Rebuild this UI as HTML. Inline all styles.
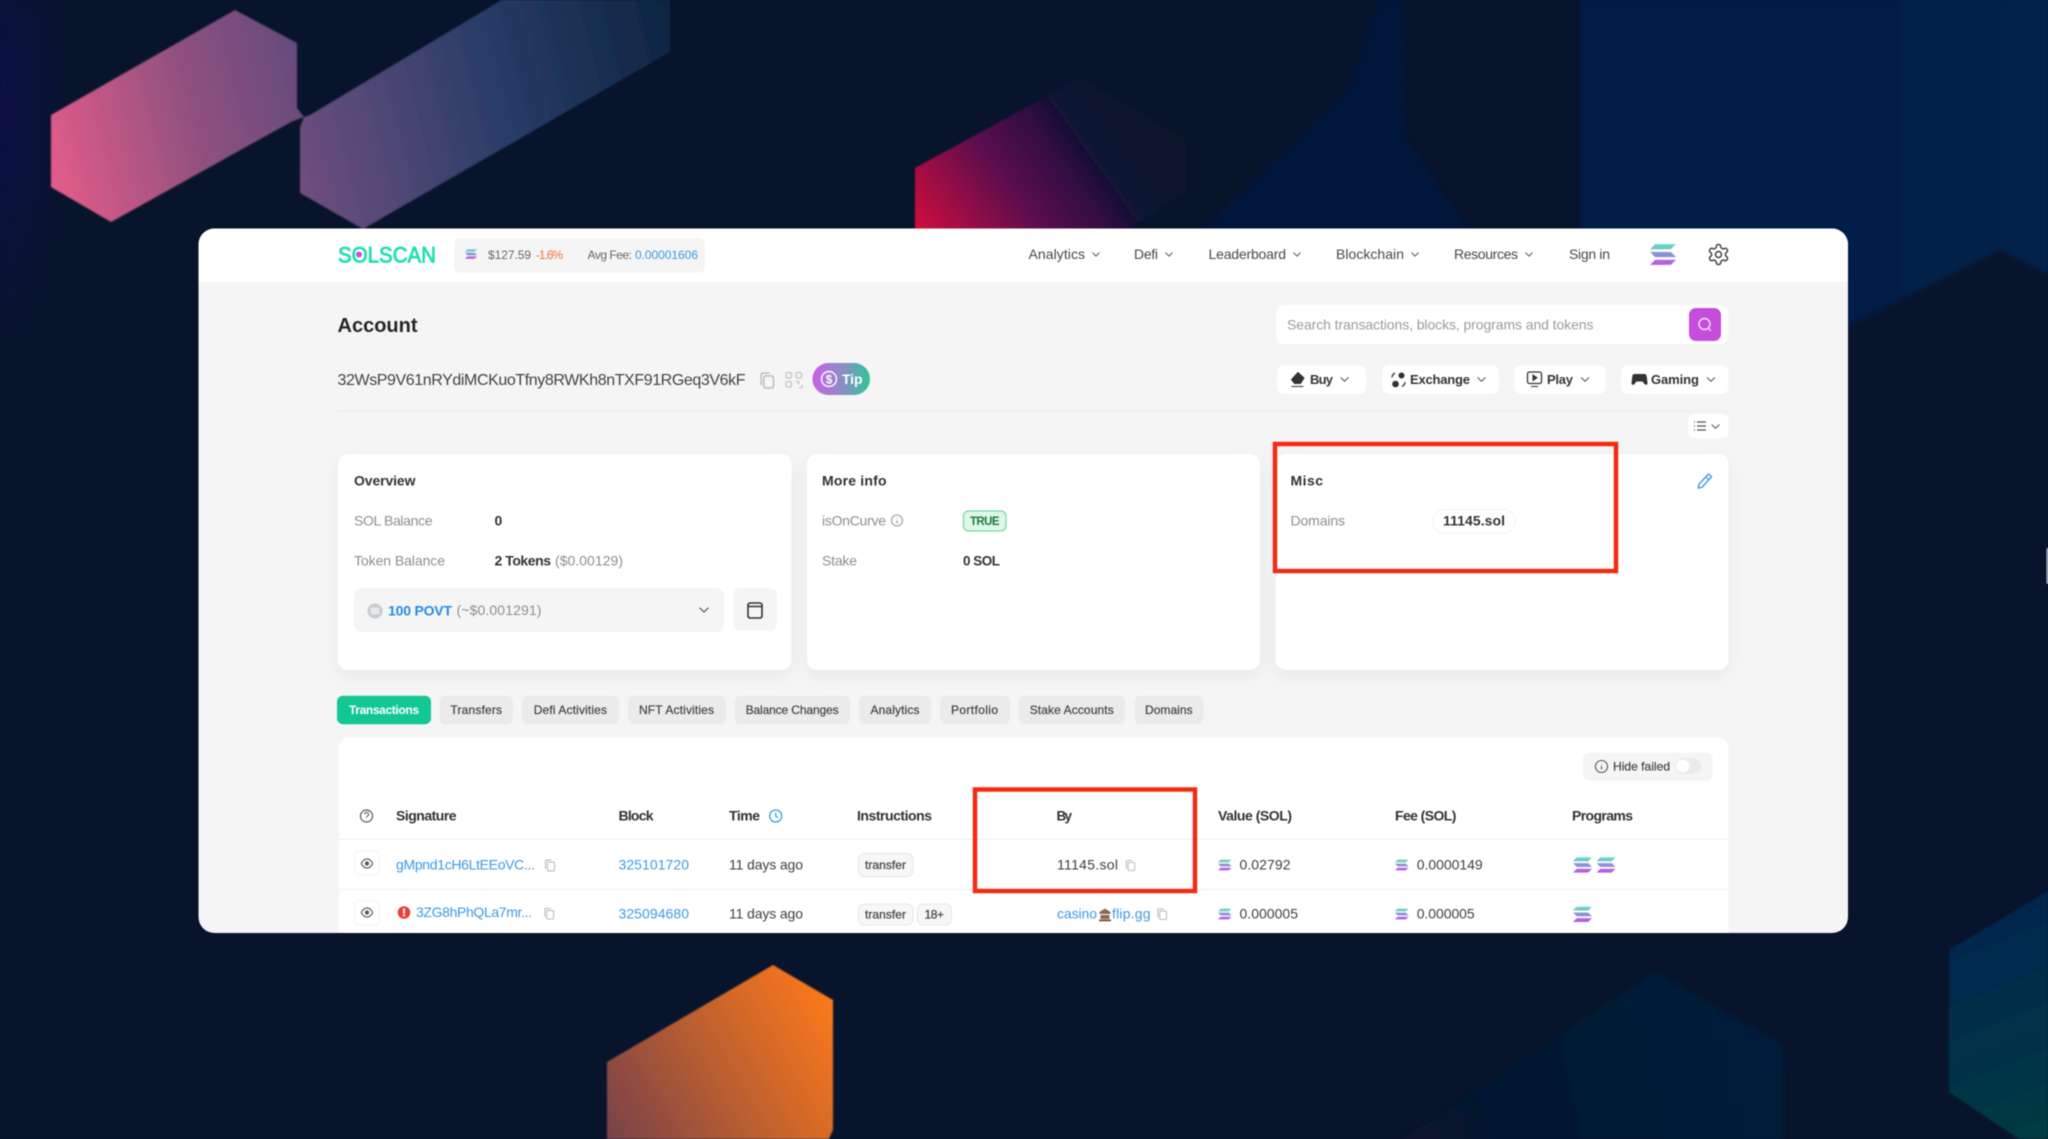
<!DOCTYPE html>
<html lang="en"><head><meta charset="utf-8"><title>Solscan Account</title>
<style>
html,body{margin:0;padding:0;background:#08142b;width:2048px;height:1139px;overflow:hidden}
svg{display:block;filter:blur(.45px)}
text{font-family:"Liberation Sans",Arial,sans-serif;font-size:14px;fill:#3f3f3f}
.b{font-weight:700;fill:#333}
.g{fill:#8e8e8e}
.l{fill:#3a9be2}
.s12{font-size:12px}
.tab{font-size:12px;fill:#444;stroke:#444;stroke-width:.2px}
.nav{fill:#484848}
.btn{font-size:13px;font-weight:700;fill:#333}
</style></head><body>
<svg width="2048" height="1139" viewBox="0 0 2048 1139" xmlns="http://www.w3.org/2000/svg">
<defs>
<filter id="bf" x="-20%" y="-20%" width="140%" height="140%"><feGaussianBlur stdDeviation="3"/></filter>
<filter id="bs" x="-10%" y="-10%" width="120%" height="120%"><feGaussianBlur stdDeviation=".7"/></filter>
<radialGradient id="lf" gradientUnits="userSpaceOnUse" cx="0" cy="110" r="1" gradientTransform="translate(0 110) scale(75 260) translate(0 -110)"><stop offset="0" stop-color="#0d1045"/><stop offset="1" stop-color="#0d1045" stop-opacity="0"/></radialGradient>
<linearGradient id="pk" gradientUnits="userSpaceOnUse" x1="51" y1="200" x2="670" y2="40"><stop offset="0" stop-color="#e65c88"/><stop offset=".25" stop-color="#8f507f"/><stop offset=".45" stop-color="#604b7b"/><stop offset=".72" stop-color="#283c66"/><stop offset="1" stop-color="#0e2542"/></linearGradient>
<linearGradient id="rd" gradientUnits="userSpaceOnUse" x1="915" y1="240" x2="1150" y2="70"><stop offset="0" stop-color="#d80f3c"/><stop offset=".38" stop-color="#5a0d4e"/><stop offset=".56" stop-color="#330b42"/><stop offset=".7" stop-color="#0a1430"/><stop offset="1" stop-color="#08142b"/></linearGradient>
<linearGradient id="or" gradientUnits="userSpaceOnUse" x1="840" y1="1000" x2="600" y2="1139"><stop offset="0" stop-color="#ff7a1a"/><stop offset=".5" stop-color="#bb5f30"/><stop offset="1" stop-color="#74404a"/></linearGradient>
<linearGradient id="bl" gradientUnits="userSpaceOnUse" x1="1400" y1="1139" x2="1783" y2="1050"><stop offset="0" stop-color="#07152c"/><stop offset="1" stop-color="#041f3c"/></linearGradient>
<linearGradient id="te" gradientUnits="userSpaceOnUse" x1="1960" y1="930" x2="2040" y2="1130"><stop offset="0" stop-color="#03264e"/><stop offset="1" stop-color="#063a42"/></linearGradient>
<linearGradient id="tr" gradientUnits="userSpaceOnUse" x1="1580" y1="0" x2="2048" y2="0"><stop offset="0" stop-color="#041a48"/><stop offset="1" stop-color="#04224b"/></linearGradient>
<linearGradient id="tip" x1="0" y1="0" x2="1" y2="0"><stop offset="0" stop-color="#c860e2"/><stop offset=".5" stop-color="#8f8cc8"/><stop offset="1" stop-color="#2ec59a"/></linearGradient>
<linearGradient id="sol" x1="0" y1="0" x2="0" y2="1"><stop offset="0" stop-color="#5fe3c0"/><stop offset=".5" stop-color="#8c8fd8"/><stop offset="1" stop-color="#c352e6"/></linearGradient>
<clipPath id="cc"><rect x="198.500" y="228.500" width="1649.500" height="704.500" rx="16"/></clipPath>
<symbol id="sl" viewBox="0 0 20 16"><path d="M4 0H20L16 4H0ZM0 6H16L20 10H4ZM4 12H20L16 16H0Z" fill="url(#sol)"/></symbol>
<symbol id="cv" viewBox="0 0 10 6"><path d="M1 1L5 5L9 1" fill="none" stroke="#555" stroke-width="1.200" stroke-linecap="round" stroke-linejoin="round"/></symbol>
<symbol id="cp" viewBox="0 0 12 13"><rect x="3.500" y="3" width="7.500" height="9.200" rx="1.500" fill="none" stroke="#b8b8b8" stroke-width="1.100"/><path d="M2 9.500H1.500V2A1.200 1.200 0 0 1 2.700 .8H8" fill="none" stroke="#b8b8b8" stroke-width="1.100"/></symbol>
<symbol id="ey" viewBox="0 0 14 12"><path d="M.8 6C2.500 2.600 4.600 1 7 1s4.500 1.600 6.200 5C11.500 9.400 9.400 11 7 11S2.500 9.400.8 6Z" fill="none" stroke="#555" stroke-width="1.200"/><circle cx="7" cy="6" r="2.300" fill="#555"/></symbol>
</defs>

<!-- background -->
<rect width="2048" height="1139" fill="#08142b"/>
<rect x="0" y="0" width="80" height="370" fill="url(#lf)"/>
<polygon points="1580,-20 2070,-20 2070,285 2000,250 1850,325 1700,300 1580,245" fill="url(#tr)" filter="url(#bf)"/>
<polygon points="1188,245 1350,85 1385,-20 1402,-20 1405,135 1478,245" fill="#05163a" filter="url(#bf)"/>
<g filter="url(#bs)">
<polygon points="235,10 297,43 297,108 304,117 291,122 111,222 51,187 51,115" fill="url(#pk)"/>
<polygon points="510,-5 670,-5 670,52 363,229 300,193 300,127 304,117 310,115" fill="url(#pk)"/>
<polygon points="915,168 1080,78 1186,140 1186,190 1124,232 915,232" fill="url(#rd)"/>
<polygon points="773,965 833,1000 833,1130 826,1145 607,1145 607,1062" fill="url(#or)"/>
</g>
<polygon points="1655,972 1783,1045 1783,1160 1369,1160" fill="url(#bl)" filter="url(#bf)"/>
<polygon points="1949,950 2070,878 2070,1160 2035,1150 1949,1092" fill="url(#te)" filter="url(#bs)"/>
<rect x="2046.500" y="548" width="1.500" height="36" rx=".7" fill="#dfe3ea" opacity=".85"/>

<!-- main card -->
<g clip-path="url(#cc)">
<rect x="198" y="228" width="1651" height="706" fill="#f5f5f5"/>
<rect x="198" y="228" width="1651" height="54" fill="#fff"/>

<!-- header -->
<text x="338" y="262.500" style="font-size:22px;fill:#1fdfae;stroke:#1fdfae;stroke-width:.8px" textLength="98" lengthAdjust="spacingAndGlyphs">SOLSCAN</text>
<circle cx="359" cy="254.500" r="3" fill="#c94fd8"/>
<rect x="454" y="238" width="251" height="34.500" rx="6" fill="#f5f5f5"/>
<use href="#sl" x="465" y="249" width="12" height="10"/>
<text x="488" y="259" class="s12" style="fill:#666" textLength="43">$127.59</text>
<text x="536" y="259" class="s12" style="fill:#ef7134" textLength="27">-1.6%</text>
<text x="587.500" y="259" class="s12" style="fill:#666" textLength="44.500">Avg Fee:</text>
<text x="635" y="259" class="s12 l" textLength="63">0.00001606</text>

<text x="1028.500" y="259" class="nav" textLength="56.500">Analytics</text><use href="#cv" x="1092" y="252" width="8" height="5"/>
<text x="1134" y="259" class="nav" textLength="24">Defi</text><use href="#cv" x="1165" y="252" width="8" height="5"/>
<text x="1208.500" y="259" class="nav" textLength="77.500">Leaderboard</text><use href="#cv" x="1293" y="252" width="8" height="5"/>
<text x="1336" y="259" class="nav" textLength="68">Blockchain</text><use href="#cv" x="1411" y="252" width="8" height="5"/>
<text x="1454" y="259" class="nav" textLength="64">Resources</text><use href="#cv" x="1525" y="252" width="8" height="5"/>
<text x="1569" y="259" class="nav" textLength="41">Sign in</text>
<use href="#sl" x="1650" y="244" width="26" height="21" preserveAspectRatio="none"/>
<g transform="translate(1706.500,242.500)"><path d="M12.220 2h-.44a2 2 0 0 0-2 2v.18a2 2 0 0 1-1 1.730l-.43.25a2 2 0 0 1-2 0l-.15-.08a2 2 0 0 0-2.730.73l-.22.38a2 2 0 0 0 .73 2.730l.15.1a2 2 0 0 1 1 1.720v.51a2 2 0 0 1-1 1.740l-.15.09a2 2 0 0 0-.73 2.730l.22.38a2 2 0 0 0 2.730.73l.15-.08a2 2 0 0 1 2 0l.43.25a2 2 0 0 1 1 1.730V20a2 2 0 0 0 2 2h.44a2 2 0 0 0 2-2v-.18a2 2 0 0 1 1-1.730l.43-.25a2 2 0 0 1 2 0l.15.08a2 2 0 0 0 2.730-.73l.22-.39a2 2 0 0 0-.73-2.730l-.15-.08a2 2 0 0 1-1-1.740v-.5a2 2 0 0 1 1-1.740l.15-.09a2 2 0 0 0 .73-2.730l-.22-.38a2 2 0 0 0-2.730-.73l-.15.08a2 2 0 0 1-2 0l-.43-.25a2 2 0 0 1-1-1.730V4a2 2 0 0 0-2-2z" fill="none" stroke="#444" stroke-width="1.500"/><circle cx="12" cy="12" r="3" fill="none" stroke="#444" stroke-width="1.500"/></g>

<!-- title -->
<text x="337.500" y="332" class="b" style="font-size:20px;fill:#262626" textLength="80">Account</text>
<text x="337.500" y="385" style="font-size:16px;fill:#444" textLength="408">32WsP9V61nRYdiMCKuoTfny8RWKh8nTXF91RGeq3V6kF</text>
<use href="#cp" x="759" y="372" width="16" height="17"/>
<g fill="none" stroke="#c4c4c4" stroke-width="1.300"><rect x="786" y="372.500" width="5.500" height="5.500" rx="1.500"/><rect x="796" y="372.500" width="5.500" height="5.500" rx="1.500"/><rect x="786" y="381.500" width="5.500" height="5.500" rx="1.500"/><path d="M795.500 381.500h3v3M802 385v2.500h-3"/></g>
<rect x="812.500" y="363" width="57.500" height="32" rx="16" fill="url(#tip)"/>
<circle cx="829" cy="379" r="7.500" fill="none" stroke="#fff" stroke-width="1.400"/>
<text x="829" y="383.500" text-anchor="middle" class="s12" style="fill:#fff;font-weight:700">$</text>
<text x="842" y="384" class="b" style="fill:#fff" textLength="20.500">Tip</text>

<!-- search -->
<rect x="1276" y="305" width="452.500" height="39" rx="8" fill="#fff"/>
<text x="1287" y="329.500" style="fill:#9b9b9b" textLength="306.500">Search transactions, blocks, programs and tokens</text>
<rect x="1689" y="308" width="32" height="33" rx="7" fill="#c44edb"/>
<circle cx="1704.500" cy="324" r="5.500" fill="none" stroke="#f5dcfa" stroke-width="1.400"/><path d="M1708 328l2.500 2.500" stroke="#f5dcfa" stroke-width="1.400" stroke-linecap="round"/>

<!-- action buttons -->
<rect x="1277" y="365" width="89" height="29" rx="7" fill="#fff"/>
<rect x="1382" y="365" width="117" height="29" rx="7" fill="#fff"/>
<rect x="1514.500" y="365" width="91" height="29" rx="7" fill="#fff"/>
<rect x="1621" y="365" width="107.500" height="29" rx="7" fill="#fff"/>
<text x="1310" y="384" class="btn" textLength="23">Buy</text>
<text x="1410" y="384" class="btn" textLength="60">Exchange</text>
<text x="1547" y="384" class="btn" textLength="26">Play</text>
<text x="1651" y="384" class="btn" textLength="48">Gaming</text>
<use href="#cv" x="1340" y="376.500" width="9" height="6"/><use href="#cv" x="1477" y="376.500" width="9" height="6"/><use href="#cv" x="1580.500" y="376.500" width="9" height="6"/><use href="#cv" x="1706.500" y="376.500" width="9" height="6"/>
<path d="M1298 372.500l6 5.500-3.500 5.500h-6l-3-4zM1291.500 386.500h12" fill="#333" stroke="#333" stroke-width="1"/>
<g fill="#333"><circle cx="1401.500" cy="375.500" r="3"/><circle cx="1395.500" cy="384" r="3.300"/><path d="M1392 377.500c0-2 1-3.500 3-4.500M1405 382c0 2-1 3.500-3 4.500" fill="none" stroke="#333" stroke-width="1.300"/></g>
<rect x="1527.500" y="372" width="14" height="11.500" rx="2" fill="none" stroke="#333" stroke-width="1.300"/><path d="M1533 375v5.500l4-2.700zM1531 386.500h7" fill="#333" stroke="#333"/>
<path d="M1634.500 374h10c1.500 0 2 1 2.200 2.500l.8 6.500c.2 1.800-1.900 2.500-3 1l-2-2.500h-6l-2 2.500c-1.100 1.500-3.200.8-3-1l.8-6.500c.2-1.500.7-2.500 2.200-2.500z" fill="#333"/>

<rect x="338" y="410.500" width="1390.500" height="1" fill="#ececec"/>
<rect x="1688" y="414" width="40.500" height="24" rx="5" fill="#fff"/>
<path d="M1697 422h9M1697 426h9M1697 430h9M1694 422h1M1694 426h1M1694 430h1" stroke="#555" stroke-width="1.300"/>
<use href="#cv" x="1711" y="423.500" width="9" height="6"/>

<!-- cards -->
<g style="filter:drop-shadow(0 6px 8px rgba(0,0,0,.05))" fill="#fff">
<rect x="338" y="454" width="453.500" height="216" rx="10"/>
<rect x="807" y="454" width="453" height="216" rx="10"/>
<rect x="1275.500" y="454" width="453" height="216" rx="10"/>
</g>

<text x="354" y="485.500" class="b" textLength="61.500">Overview</text>
<text x="354" y="525.500" class="g" textLength="78.500">SOL Balance</text>
<text x="494.500" y="525.500" class="b">0</text>
<text x="354" y="565.500" class="g" textLength="91">Token Balance</text>
<text x="494.500" y="565.500" class="b" textLength="56.500">2 Tokens</text>
<text x="555" y="565.500" class="g" textLength="68">($0.00129)</text>
<rect x="354" y="588" width="370" height="44" rx="8" fill="#f5f5f5"/>
<circle cx="375" cy="611" r="7.500" fill="#c6cbcf"/><rect x="370.500" y="607.500" width="9" height="7" rx="1" fill="#e6e8ea"/>
<text x="388" y="615.500" style="font-weight:700;fill:#2a8ae2" textLength="64">100 POVT</text>
<text x="456.500" y="615" class="g" textLength="85">(~$0.001291)</text>
<use href="#cv" x="699" y="607" width="10" height="6"/>
<rect x="733" y="588" width="44" height="42.500" rx="7" fill="#f5f5f5"/>
<rect x="748" y="603" width="14" height="15" rx="2" fill="none" stroke="#333" stroke-width="1.600"/><path d="M748 606.500h14" stroke="#333" stroke-width="1.400"/>

<text x="822" y="485.500" class="b" textLength="64.500">More info</text>
<text x="822" y="525.500" class="g" textLength="64">isOnCurve</text>
<circle cx="897" cy="520.500" r="5.500" fill="none" stroke="#999" stroke-width="1.100"/><path d="M897 518v.6M897 520v3.500" stroke="#999" stroke-width="1.100"/>
<rect x="963.500" y="511" width="42.500" height="20" rx="5" fill="#ddf8e7" stroke="#62d195"/>
<text x="970" y="525" style="font-size:11.500px;font-weight:700;fill:#1f7a3f" textLength="29.500">TRUE</text>
<text x="822" y="565.500" class="g" textLength="35">Stake</text>
<text x="963" y="565.500" style="font-size:13.500px;font-weight:700;fill:#333" textLength="37">0 SOL</text>

<text x="1290.500" y="485.500" class="b" textLength="32.500">Misc</text>
<text x="1290.500" y="525.500" class="g" textLength="54.500">Domains</text>
<rect x="1432.500" y="509.500" width="83" height="23.500" rx="11.700" fill="#fff" stroke="#f2f2f2"/>
<text x="1443" y="525.500" class="b" textLength="62">11145.sol</text>
<path d="M1708.500 474l3 2.700-9.500 10.500-3.800 1 .8-3.900z" fill="none" stroke="#4a9fe2" stroke-width="1.500" stroke-linejoin="round"/><path d="M1706 477l3 2.700" stroke="#4a9fe2" stroke-width="1.200"/>

<!-- tabs -->
<g fill="#ebebeb">
<rect x="337" y="695.700" width="94" height="28.500" rx="6" fill="#13c795"/>
<rect x="439.500" y="695.700" width="73.500" height="28.500" rx="6"/>
<rect x="522" y="695.700" width="97" height="28.500" rx="6"/>
<rect x="628" y="695.700" width="98" height="28.500" rx="6"/>
<rect x="734.600" y="695.700" width="115.400" height="28.500" rx="6"/>
<rect x="859" y="695.700" width="72" height="28.500" rx="6"/>
<rect x="940" y="695.700" width="70" height="28.500" rx="6"/>
<rect x="1018.700" y="695.700" width="106.300" height="28.500" rx="6"/>
<rect x="1134.500" y="695.700" width="69" height="28.500" rx="6"/>
</g>
<text x="349" y="714" class="s12" style="font-weight:700;fill:#fff" textLength="70">Transactions</text>
<text x="450.400" y="714" class="tab" textLength="51.600">Transfers</text>
<text x="533.700" y="714" class="tab" textLength="73.300">Defi Activities</text>
<text x="639" y="714" class="tab" textLength="75">NFT Activities</text>
<text x="745.600" y="714" class="tab" textLength="93">Balance Changes</text>
<text x="870.500" y="714" class="tab" textLength="49">Analytics</text>
<text x="951" y="714" class="tab" textLength="47">Portfolio</text>
<text x="1029.700" y="714" class="tab" textLength="84">Stake Accounts</text>
<text x="1145" y="714" class="tab" textLength="47.600">Domains</text>

<!-- table -->
<rect x="339" y="737.300" width="1389.500" height="230" rx="10" fill="#fff"/>
<rect x="1583" y="752.700" width="129.700" height="28" rx="6" fill="#f5f5f5"/>
<circle cx="1601.500" cy="766.500" r="6" fill="none" stroke="#555" stroke-width="1.100"/><path d="M1601.500 764v.6M1601.500 766v3.500" stroke="#555" stroke-width="1.100"/>
<text x="1613" y="770.500" class="s12" style="fill:#444;stroke:#444;stroke-width:.2px" textLength="57">Hide failed</text>
<rect x="1675.500" y="758" width="25.500" height="16" rx="8" fill="#ebebeb"/><circle cx="1683" cy="766" r="6.500" fill="#fff"/>

<circle cx="366.500" cy="816" r="6" fill="none" stroke="#555" stroke-width="1.200"/><path d="M364.700 814.500a1.900 1.900 0 1 1 2.800 1.600c-.6.400-1 .7-1 1.400M366.500 819v.4" fill="none" stroke="#555" stroke-width="1"/>
<text x="396" y="820.500" class="b" textLength="60.600">Signature</text>
<text x="618.500" y="820.500" class="b" textLength="35">Block</text>
<text x="729" y="820.500" class="b" textLength="31">Time</text>
<circle cx="775.700" cy="816" r="6" fill="none" stroke="#3a9be2" stroke-width="1.300"/><path d="M775.700 812.500v3.700l2.500 1.500" fill="none" stroke="#3a9be2" stroke-width="1.200"/>
<text x="857" y="820.500" class="b" textLength="75">Instructions</text>
<text x="1056.500" y="820.500" style="font-size:13.500px;font-weight:700;fill:#333" textLength="15.500">By</text>
<text x="1218" y="820.500" class="b" textLength="74">Value (SOL)</text>
<text x="1395" y="820.500" class="b" textLength="61.400">Fee (SOL)</text>
<text x="1572" y="820.500" class="b" textLength="61">Programs</text>
<rect x="339" y="839" width="1389.500" height="1" fill="#f0f0f0"/>
<rect x="339" y="889" width="1389.500" height="1" fill="#f0f0f0"/>

<!-- row 1 -->
<rect x="354.500" y="851" width="25" height="24" rx="5" fill="#fff" stroke="#f4f4f4"/>
<use href="#ey" x="360.500" y="858" width="13" height="11"/>
<text x="396" y="869.500" class="l" textLength="139">gMpnd1cH6LtEEoVC...</text>
<use href="#cp" x="544" y="859" width="11.500" height="13"/>
<text x="618.500" y="869.500" class="l" textLength="70.500">325101720</text>
<text x="729" y="869.500" textLength="74">11 days ago</text>
<rect x="858.500" y="853.500" width="54.500" height="23" rx="6" fill="#f7f7f7" stroke="#e6e6e6"/>
<text x="865" y="869" class="s12" style="fill:#444;stroke:#444;stroke-width:.25px" textLength="41">transfer</text>
<text x="1057" y="869.500" textLength="61">11145.sol</text>
<use href="#cp" x="1125" y="859.500" width="10.500" height="12"/>
<use href="#sl" x="1218" y="859" width="13.500" height="12"/>
<text x="1239.500" y="869.500" textLength="51">0.02792</text>
<use href="#sl" x="1395" y="859" width="13.500" height="12"/>
<text x="1416.700" y="869.500" textLength="66">0.0000149</text>
<use href="#sl" x="1573" y="856.700" width="19" height="16.600"/>
<use href="#sl" x="1596.500" y="856.700" width="19" height="16.600"/>

<!-- row 2 -->
<rect x="354.500" y="900.500" width="25" height="24.500" rx="5" fill="#fff" stroke="#f4f4f4"/>
<use href="#ey" x="360.500" y="907" width="13" height="11"/>
<circle cx="404" cy="912.500" r="6.300" fill="#e8403c"/><rect x="403" y="908.500" width="2" height="5" fill="#fff"/><rect x="403" y="914.500" width="2" height="1.800" fill="#fff"/>
<text x="416" y="917" class="l" textLength="116">3ZG8hPhQLa7mr...</text>
<use href="#cp" x="543.500" y="907.500" width="11" height="12.500"/>
<text x="618.500" y="918.500" class="l" textLength="70.500">325094680</text>
<text x="729" y="918.500" textLength="74">11 days ago</text>
<rect x="858.500" y="904" width="54.500" height="21" rx="6" fill="#f7f7f7" stroke="#e6e6e6"/>
<text x="865" y="918.500" class="s12" style="fill:#444;stroke:#444;stroke-width:.25px" textLength="41">transfer</text>
<rect x="917.500" y="904" width="34" height="21" rx="6" fill="#f7f7f7" stroke="#e6e6e6"/>
<text x="924.500" y="918.500" class="s12" style="fill:#444;stroke:#444;stroke-width:.25px" textLength="19.500">18+</text>
<text x="1057" y="918.500" class="l" textLength="40">casino</text>
<path d="M1099.500 912l5.500-3.500 5.500 3.500v2h-11zM1100.500 915h9v4h-9z" fill="#8c6a52"/><rect x="1099" y="919.500" width="12" height="1.800" fill="#6e5040"/>
<text x="1112" y="918.500" class="l" textLength="38.600">flip.gg</text>
<use href="#cp" x="1156.500" y="908" width="11" height="12.500"/>
<use href="#sl" x="1218" y="908" width="13.500" height="12"/>
<text x="1239.500" y="918.500" textLength="58.500">0.000005</text>
<use href="#sl" x="1395" y="908" width="13.500" height="12"/>
<text x="1416.700" y="918.500" textLength="58">0.000005</text>
<use href="#sl" x="1573" y="906" width="19" height="16.700"/>

<!-- red annotation boxes -->
<rect x="1275" y="444" width="341" height="127" fill="none" stroke="#f42b12" stroke-width="4.500"/>
<rect x="975" y="789.500" width="220" height="101.500" fill="none" stroke="#f42b12" stroke-width="4.500"/>
</g>
</svg>
</body></html>
